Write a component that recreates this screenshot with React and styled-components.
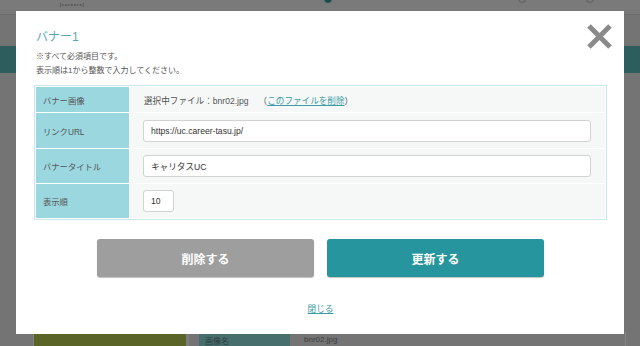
import React from 'react';
import styled, { createGlobalStyle } from 'styled-components';

const GlobalStyle = createGlobalStyle`
  * { box-sizing: border-box; }
  body {
    margin: 0;
    font-family: "Liberation Sans", "Noto Sans CJK JP", sans-serif;
  }
`;

const Page = styled.div`
  position: relative;
  width: 640px;
  height: 346px;
  overflow: hidden;
  background: #747474;
`;

const BgHeader = styled.div`
  display: flex;
  align-items: flex-start;
  height: 15px;
  background: #7a7a7a;
  border-bottom: 1px solid #6b6b6b;
`;

const Logo = styled.div`
  margin: 2px 0 0 60px;
  font-size: 4px;
  letter-spacing: 1px;
  color: #2e2e2e;
`;

const Step = styled.span`
  display: block;
  width: 8px;
  height: 8px;
  margin-top: -5px;
  margin-left: ${(p) => p.$gap}px;
  border-radius: 50%;
  background: ${(p) => (p.$on ? '#1d4c4d' : 'transparent')};
  border: 1px solid ${(p) => (p.$on ? '#1d4c4d' : '#5c5c5c')};
`;

const BgBand = styled.div`
  margin-top: 31px;
  height: 27px;
  background: #2e5d5e;
`;

const BgRow = styled.div`
  display: flex;
  align-items: stretch;
  height: 20px;
  margin: 259px 14px 0 33px;
  border-left: 1px solid #858585;
  border-right: 1px solid #858585;
  font-size: 8px;
`;

const Olive = styled.div`
  width: 155px;
  background: #5b6427;
  border-right: 3px solid #7d7d7d;
`;

const BgLabel = styled.div`
  width: 91px;
  margin-left: 10px;
  padding: 3px 6px;
  background: #476d6d;
  color: #2f3f3f;
`;

const BgValue = styled.div`
  padding: 3px 14px;
  color: #3d3d3d;
`;

const Modal = styled.div`
  position: absolute;
  top: 11px;
  left: 16px;
  width: 608px;
  height: 323px;
  display: flex;
  flex-direction: column;
  padding: 16px 17px 0 18px;
  background: #fff;
`;

const Close = styled.button`
  position: absolute;
  top: 12px;
  right: 11px;
  width: 27px;
  height: 27px;
  padding: 0;
  border: 0;
  background: none;
  cursor: pointer;
`;

const Title = styled.h2`
  margin: 0 0 0 2px;
  font-size: 12px;
  line-height: 20px;
  font-weight: 400;
  color: #56a9b3;
`;

const Notes = styled.p`
  margin: 3px 0 0 2px;
  font-size: 8px;
  line-height: 14px;
  color: #555;
`;

const Table = styled.div`
  display: grid;
  grid-template-columns: 93px 1fr;
  grid-auto-rows: auto;
  gap: 1px;
  margin-top: 7px;
  padding: 1px;
  border: 1px solid #c8e8ec;
  background: #fff;
`;

const Label = styled.div`
  display: flex;
  align-items: center;
  height: ${(p) => p.$h}px;
  padding-left: 7px;
  background: #9ad7de;
  font-size: 8.3px;
  color: #555;
`;

const Cell = styled.div`
  display: flex;
  align-items: center;
  height: ${(p) => p.$h}px;
  padding: 0 13px 0 14px;
  background: #f6f8f8;
  font-size: 8.6px;
  color: #555;
`;

const DelLink = styled.a`
  margin-left: 10px;
  color: #555;
  text-decoration: none;

  span {
    color: #3b9ca6;
    text-decoration: underline;
  }
`;

const Input = styled.input`
  width: ${(p) => p.$w || '100%'};
  height: 22px;
  margin-left: -1px;
  padding: 0 7px;
  border: 1px solid #d2d2d2;
  border-radius: 3px;
  background: #fff;
  font-family: "Liberation Sans", "Noto Sans CJK JP", sans-serif;
  font-size: 8.6px;
  color: #333;
  outline: none;
`;

const Buttons = styled.div`
  display: flex;
  justify-content: center;
  gap: 13px;
  margin-top: 19px;
`;

const Button = styled.button`
  width: 217px;
  height: 38px;
  border: 0;
  border-radius: 3px;
  background: ${(p) => (p.$primary ? '#26959d' : '#9e9e9e')};
  box-shadow: 0 1px 1px rgba(0, 0, 0, 0.25);
  font-family: "Noto Sans CJK JP", sans-serif;
  font-size: 12px;
  font-weight: 700;
  color: #fff;
  cursor: pointer;
`;

const CloseLink = styled.a`
  align-self: center;
  margin-top: 25px;
  font-size: 8.6px;
  line-height: 14px;
  color: #3b9ca6;
  text-decoration: underline;
  cursor: pointer;
`;

const rows = [
  { label: 'バナー画像', h: 25, kind: 'file' },
  { label: 'リンクURL', h: 35, kind: 'text', value: 'https://uc.career-tasu.jp/' },
  { label: 'バナータイトル', h: 34, kind: 'text', value: 'キャリタスUC' },
  { label: '表示順', h: 34, kind: 'num', value: '10' },
];

const App = () => {
  return (
    <>
      <GlobalStyle />
      <Page>
        <BgHeader>
          <Logo>[careers]</Logo>
          <Step $on $gap={239} />
          <Step $gap={186} />
          <Step $gap={60} />
        </BgHeader>
        <BgBand />
        <BgRow>
          <Olive />
          <BgLabel>画像名</BgLabel>
          <BgValue>bnr02.jpg</BgValue>
        </BgRow>

        <Modal>
          <Close aria-label="close">
            <svg width="27" height="27" viewBox="0 0 27 27">
              <path d="M3 3 L24 24 M24 3 L3 24" stroke="#8a8a8a" strokeWidth="5" fill="none" />
            </svg>
          </Close>
          <Title>バナー1</Title>
          <Notes>
            ※すべて必須項目です。
            <br />
            表示順は1から整数で入力してください。
          </Notes>
          <Table>
            {rows.map((row) => (
              <React.Fragment key={row.label}>
                <Label $h={row.h}>{row.label}</Label>
                <Cell $h={row.h}>
                  {row.kind === 'file' && (
                    <>
                      選択中ファイル：bnr02.jpg
                      <DelLink>
                        （<span>このファイルを削除</span>）
                      </DelLink>
                    </>
                  )}
                  {row.kind === 'text' && <Input defaultValue={row.value} />}
                  {row.kind === 'num' && <Input $w="31px" defaultValue={row.value} />}
                </Cell>
              </React.Fragment>
            ))}
          </Table>
          <Buttons>
            <Button>削除する</Button>
            <Button $primary>更新する</Button>
          </Buttons>
          <CloseLink>閉じる</CloseLink>
        </Modal>
      </Page>
    </>
  );
};

export default App;
